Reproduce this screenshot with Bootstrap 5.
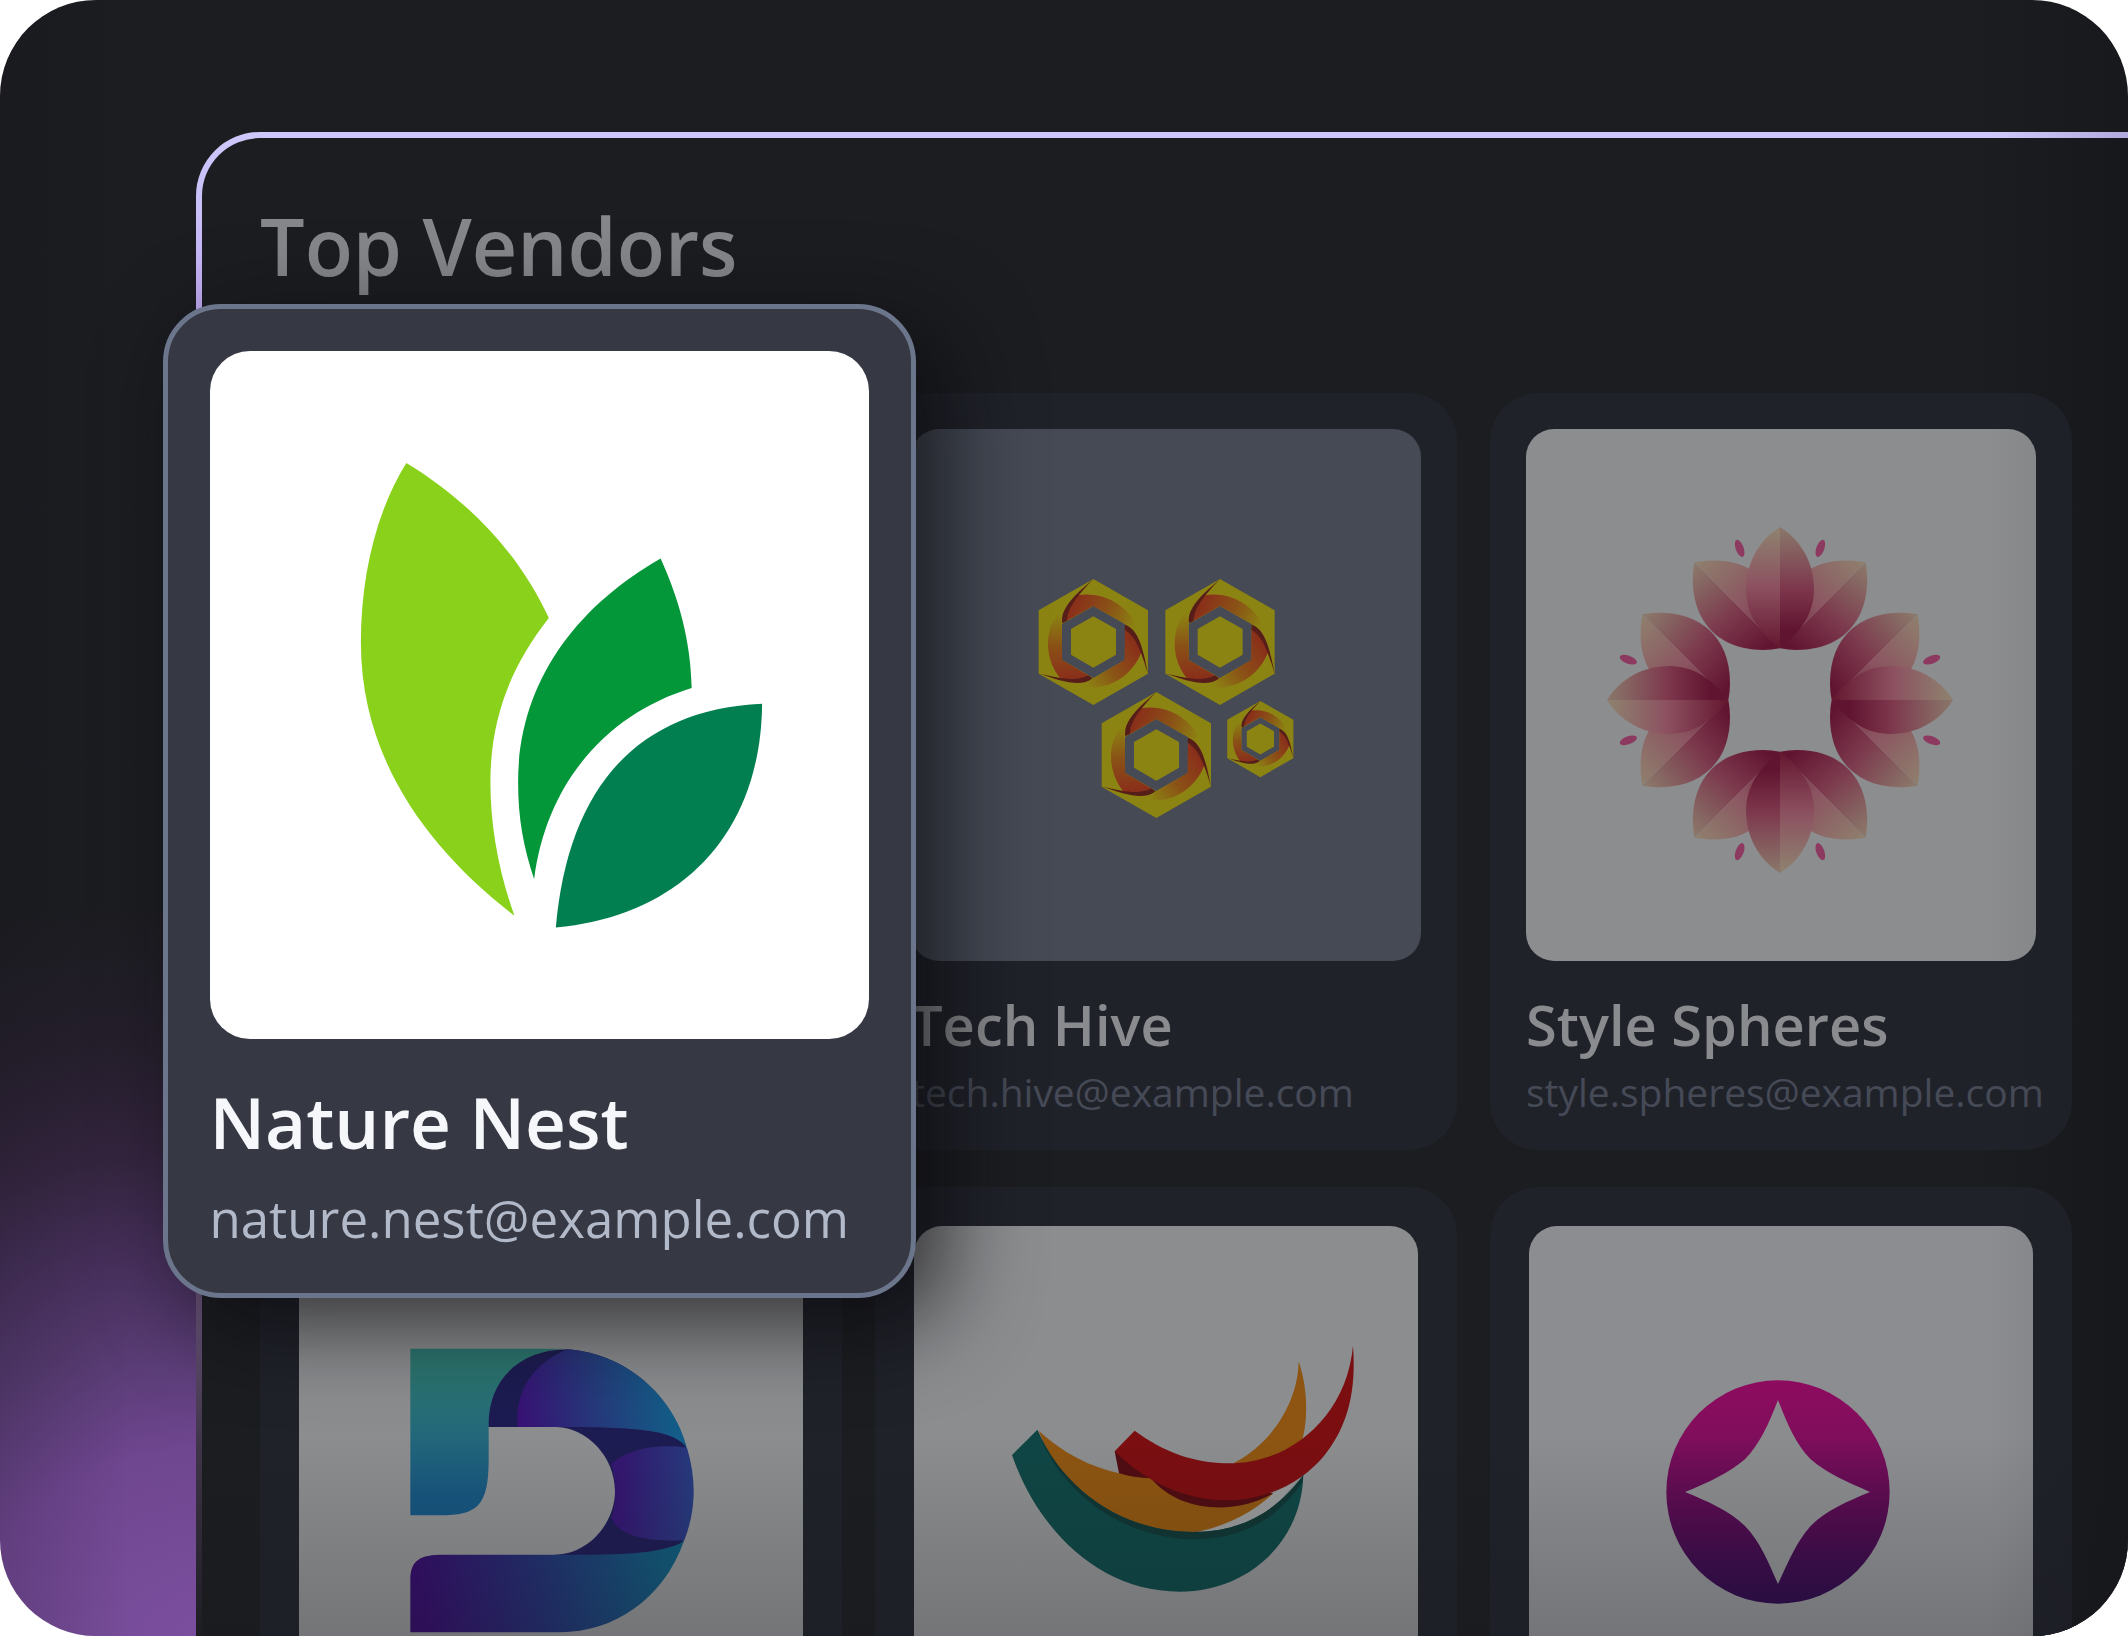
<!DOCTYPE html>
<html lang="en">
<head>
<meta charset="utf-8">
<meta name="viewport" content="width=device-width, initial-scale=1">
<title>Top Vendors</title>
<link href="https://cdn.jsdelivr.net/npm/bootstrap@5.3.0/dist/css/bootstrap.min.css" rel="stylesheet">
<style>
body{background:#fff;font-family:"Open Sans","Noto Sans",sans-serif}
.scene{height:100vh;border-radius:96px;padding:132px 0 0 196px;
background:linear-gradient(90deg,rgba(20,18,28,.16) 0,rgba(20,18,28,0) 130px),radial-gradient(ellipse 1000px 760px at 230px 1660px,#7d50a0 0%,#6f4690 28%,#573b72 42%,#47305c 54%,#34253f 67%,#251f2c 82%,rgba(28,29,33,0) 100%),linear-gradient(90deg,#1b1c20 0,#1c1d21 130px,#1c1d21 1960px,#18191c 100%)}
.panel-edge{padding:6px 0 0 6px;border-radius:64px 0 0 0;background:linear-gradient(90deg,rgba(160,150,200,0) 1800px,rgba(160,150,200,.6) 100%),linear-gradient(180deg,#cdc8fb 0,#c8bdf8 90px,#b99bec 240px,#6c557c 1170px,#3f3549 1310px,#1e1d23 1500px)}
.panel{border-radius:58px 0 0 0;padding:52px 56px 0 58px;background:linear-gradient(90deg,#1c1d21 0,#1c1d21 1760px,#18191c 100%)}
.panel::after{content:"";position:absolute;inset:0;z-index:1;pointer-events:none;
background:linear-gradient(0deg,rgba(20,20,25,.2),rgba(20,20,25,0) 200px),linear-gradient(270deg,rgba(18,18,22,.14),rgba(18,18,22,0) 140px)}
.panel-title{font-size:79px;line-height:112px;font-weight:600;color:#86878b;margin-bottom:91px}
.vendors{--bs-gutter-x:33px;--bs-gutter-y:37px}
.vendor{background:#20222a;border-radius:48px;padding:36px 36px 26px}
.vendor-wide{padding:39px}
.logo{display:block;width:100%;height:auto;border-radius:28px;background:#8c8d8f}
.logo-slate{background:#454a55}
.logo-cool{background:#8c8d91}
.vendor-name{font-size:56px;line-height:72px;font-weight:600;color:#8a8b8e;margin:27px 0 0}
.vendor-mail{display:block;font-size:39px;line-height:64px;color:#454a56;text-decoration:none;white-space:nowrap}
.spotlight{top:-89px;left:-81px;right:-58px;z-index:2;background:#363843;border:5px solid #6b768c;border-radius:58px;padding:42px 42px 35px;box-shadow:28px 24px 90px rgba(8,8,12,.7)}
.spotlight .logo{background:#fff;border-radius:40px}
.spotlight .vendor-name{font-size:71px;line-height:96px;color:#f6f7fa;margin:35px 0 8px}
.spotlight .vendor-mail{font-size:51px;line-height:80px;color:#b2b9c9}
</style>
</head>
<body>
<main class="scene overflow-hidden d-flex">
<div class="panel-edge flex-grow-1 d-flex">
<section class="panel flex-grow-1 position-relative overflow-visible">
<h1 class="panel-title">Top Vendors</h1>
<div class="row row-cols-3 vendors">

<div class="col position-relative">
<article class="spotlight position-absolute">
<svg class="logo" viewBox="210 351 659 687" role="img" aria-label="Nature Nest logo">
<g transform="translate(330 430) scale(.3333 .3444)">
<path fill="#89d11a" d="M228 95C400 195 560 345 655 545C545 680 480 830 480 1020C480 1150 505 1280 552 1408C300 1220 92 960 92 615C92 430 135 240 228 95Z"/>
<path fill="#04973a" d="M990 372C1045 490 1080 610 1083 748C840 820 650 1010 611 1302C580 1210 563 1130 563 1020C563 730 740 510 990 372Z"/>
<path fill="#027f50" d="M1294 793C1290 1180 1040 1410 676 1442C710 1060 900 810 1294 793Z"/>
</g></svg>
<h2 class="vendor-name">Nature Nest</h2>
<a class="vendor-mail" href="mailto:nature.nest@example.com">nature.nest@example.com</a>
</article>
</div>

<div class="col">
<article class="vendor h-100">
<svg class="logo logo-slate" viewBox="911 429 510 532" role="img" aria-label="Tech Hive logo">
<defs>
<linearGradient id="blade" gradientUnits="userSpaceOnUse" x1="235" y1="170" x2="410" y2="250"><stop stop-color="#8a301a"/><stop offset=".5" stop-color="#8a5116"/><stop offset="1" stop-color="#8c8412"/></linearGradient>
<g id="fin"><path fill="url(#blade)" d="M233 166C305 154 382 190 412 264L375 252L280 198L200 243C200 215 215 190 233 166Z"/><path fill="#571d18" d="M280 117C225 165 180 205 187 250L201 243C203 205 225 175 280 117Z"/></g>
<g id="hex"><path fill="#8c8412" fill-rule="evenodd" d="M280 117L444 211V401L280 495L116 401V211ZM280 198L186 252V360L280 414L375 360V252Z"/>
<use href="#fin"/><use href="#fin" transform="rotate(120 280 306)"/><use href="#fin" transform="rotate(240 280 306)"/>
<path fill="#8c8412" d="M280 229L348 267V344L280 383L213 344V267Z"/></g>
</defs>
<g transform="translate(1000 540) scale(.33333)"><use href="#hex"/><use href="#hex" x="380"/><use href="#hex" x="189" y="339"/><use href="#hex" transform="translate(611.6 412) scale(.605)"/></g>
</svg>
<h2 class="vendor-name">Tech Hive</h2>
<a class="vendor-mail" href="mailto:tech.hive@example.com">tech.hive@example.com</a>
</article>
</div>

<div class="col">
<article class="vendor h-100">
<svg class="logo" viewBox="1526 429 510 532" role="img" aria-label="Style Spheres logo">
<defs>
<linearGradient id="pl" gradientUnits="userSpaceOnUse" x1="600" y1="81" x2="600" y2="445"><stop offset=".05" stop-color="#8e7e6e"/><stop offset=".5" stop-color="#8c5060"/><stop offset="1" stop-color="#641730"/></linearGradient>
<linearGradient id="pd" gradientUnits="userSpaceOnUse" x1="600" y1="81" x2="600" y2="445"><stop stop-color="#8a786b"/><stop offset=".5" stop-color="#7d384d"/><stop offset=".85" stop-color="#611430"/></linearGradient>
<linearGradient id="sl" gradientUnits="userSpaceOnUse" x1="343" y1="187" x2="600" y2="445"><stop stop-color="#8f806e"/><stop offset=".55" stop-color="#8b5360"/><stop offset="1" stop-color="#641730"/></linearGradient>
<linearGradient id="sd" gradientUnits="userSpaceOnUse" x1="343" y1="187" x2="570" y2="460"><stop stop-color="#8b7b6c"/><stop offset=".55" stop-color="#7c394d"/><stop offset=".95" stop-color="#611430"/></linearGradient>
<g id="side"><path fill="url(#sd)" d="M343 187C320 325 385 450 550 450Q575 450 600 445Z"/><path fill="url(#sl)" d="M343 187C455 168 545 200 570 290L600 445Z"/><ellipse cx="479" cy="145" rx="12" ry="27" fill="#8c3a60" transform="rotate(-20 479 145)"/></g>
<g id="bloom"><use href="#side"/><use href="#side" transform="translate(1200 0) scale(-1 1)"/><path fill="url(#pl)" d="M600 81C535 122 498 190 498 270C498 340 540 400 600 445Z"/><path fill="url(#pd)" d="M600 81C665 122 702 190 702 270C702 340 660 400 600 445Z"/></g>
</defs>
<g transform="translate(1580 500) scale(.33333)"><use href="#bloom"/><use href="#bloom" transform="rotate(90 600 600)"/><use href="#bloom" transform="rotate(180 600 600)"/><use href="#bloom" transform="rotate(270 600 600)"/></g>
</svg>
<h2 class="vendor-name">Style Spheres</h2>
<a class="vendor-mail" href="mailto:style.spheres@example.com">style.spheres@example.com</a>
</article>
</div>

<div class="col">
<article class="vendor vendor-wide">
<svg class="logo" viewBox="299 1226 504 532" role="img" aria-label="Ribbon D logo">
<defs>
<linearGradient id="d1" x2="0" y2="1"><stop offset=".1" stop-color="#2c766f"/><stop offset=".45" stop-color="#256b79"/><stop offset=".9" stop-color="#16557f"/></linearGradient>
<linearGradient id="d2" gradientUnits="userSpaceOnUse" x1="420" y1="430" x2="870" y2="350"><stop stop-color="#381275"/><stop offset=".5" stop-color="#26397b"/><stop offset="1" stop-color="#135d88"/></linearGradient>
<linearGradient id="d3"><stop offset=".1" stop-color="#341670"/><stop offset="1" stop-color="#263b7d"/></linearGradient>
<linearGradient id="d4" gradientUnits="userSpaceOnUse" x1="130" y1="980" x2="860" y2="840"><stop stop-color="#330e66"/><stop offset=".5" stop-color="#21306e"/><stop offset="1" stop-color="#115877"/></linearGradient>
</defs>
<g transform="translate(380 1280) scale(.33333)">
<path fill="url(#d1)" d="M91 206H570C430 206 330 300 326 440V540C326 680 290 706 180 706H91Z"/>
<path fill="#1d1c52" d="M326 441C322 300 420 208 562 208C740 220 880 350 919 503C948 600 946 690 911 781C880 860 700 900 525 824C620 824 705 735 705 633C705 530 620 443 530 441Z"/>
<path fill="url(#d2)" d="M413 441C405 330 460 250 562 208C740 220 880 350 921 503C880 450 780 441 530 441Z"/>
<path fill="url(#d3)" d="M694 552C740 510 820 490 921 503C950 600 948 690 913 781C800 785 720 770 694 715C710 670 710 600 694 552Z"/>
<path fill="url(#d4)" d="M91 1057V900C91 840 120 824 190 824H650C780 824 880 810 913 781C850 960 700 1057 540 1057Z"/>
</g></svg>
</article>
</div>

<div class="col">
<article class="vendor vendor-wide">
<svg class="logo" viewBox="914 1226 504 532" role="img" aria-label="Swoosh logo">
<g transform="translate(980 1320) scale(.33333)">
<path fill="#8d5511" d="M956 124C955 240 880 370 760 430C830 460 930 420 968 355C985 290 982 200 956 124ZM176 332C250 400 330 440 417 460L515 475L880 522C810 590 730 630 650 640C450 650 250 530 176 332Z"/>
<path fill="#989999" d="M650 636C750 615 820 575 880 520L945 485C870 590 780 635 650 642Z"/>
<path fill="#0f4645" d="M172 329L96 405C170 620 350 815 600 815C800 815 965 670 970 465C900 560 800 636 640 636C430 636 250 510 172 329Z"/>
<path fill="#103634" d="M172 329C250 510 430 636 640 636C800 636 900 560 970 465L965 490C890 600 780 658 640 658C430 655 240 520 172 329Z"/>
<path fill="#4f0d12" d="M404 394L417 460Q460 473 513 475C600 580 770 585 880 520L700 500Z"/>
<path fill="#7b0e11" d="M464 332L404 394C500 490 620 541 740 541C870 541 970 480 1030 410C1100 325 1130 220 1119 77C1100 290 930 430 750 430C640 430 550 395 464 332Z"/>
</g></svg>
</article>
</div>

<div class="col">
<article class="vendor vendor-wide">
<svg class="logo logo-cool" viewBox="1529 1226 504 532" role="img" aria-label="Star logo">
<defs><linearGradient id="orb" x2="0" y2="1"><stop stop-color="#8e0b5f"/><stop offset=".25" stop-color="#800e5c"/><stop offset=".55" stop-color="#590b50"/><stop offset=".8" stop-color="#3d0c4b"/><stop offset="1" stop-color="#2d0c4a"/></linearGradient></defs>
<g transform="translate(1640 1360) scale(.33333)">
<circle cx="414" cy="396" r="335" fill="url(#orb)"/>
<path fill="#8a8c8e" d="M414 120C445 200 470 255 512 298C560 340 620 365 690 396C620 425 560 450 512 498C470 545 445 605 414 672C385 605 360 545 315 498C265 450 205 425 135 396C205 368 265 340 315 298C360 250 385 195 414 120Z"/>
</g></svg>
</article>
</div>

</div>
</section>
</div>
</main>
<script src="https://cdn.jsdelivr.net/npm/bootstrap@5.3.0/dist/js/bootstrap.bundle.min.js"></script>
</body>
</html>
